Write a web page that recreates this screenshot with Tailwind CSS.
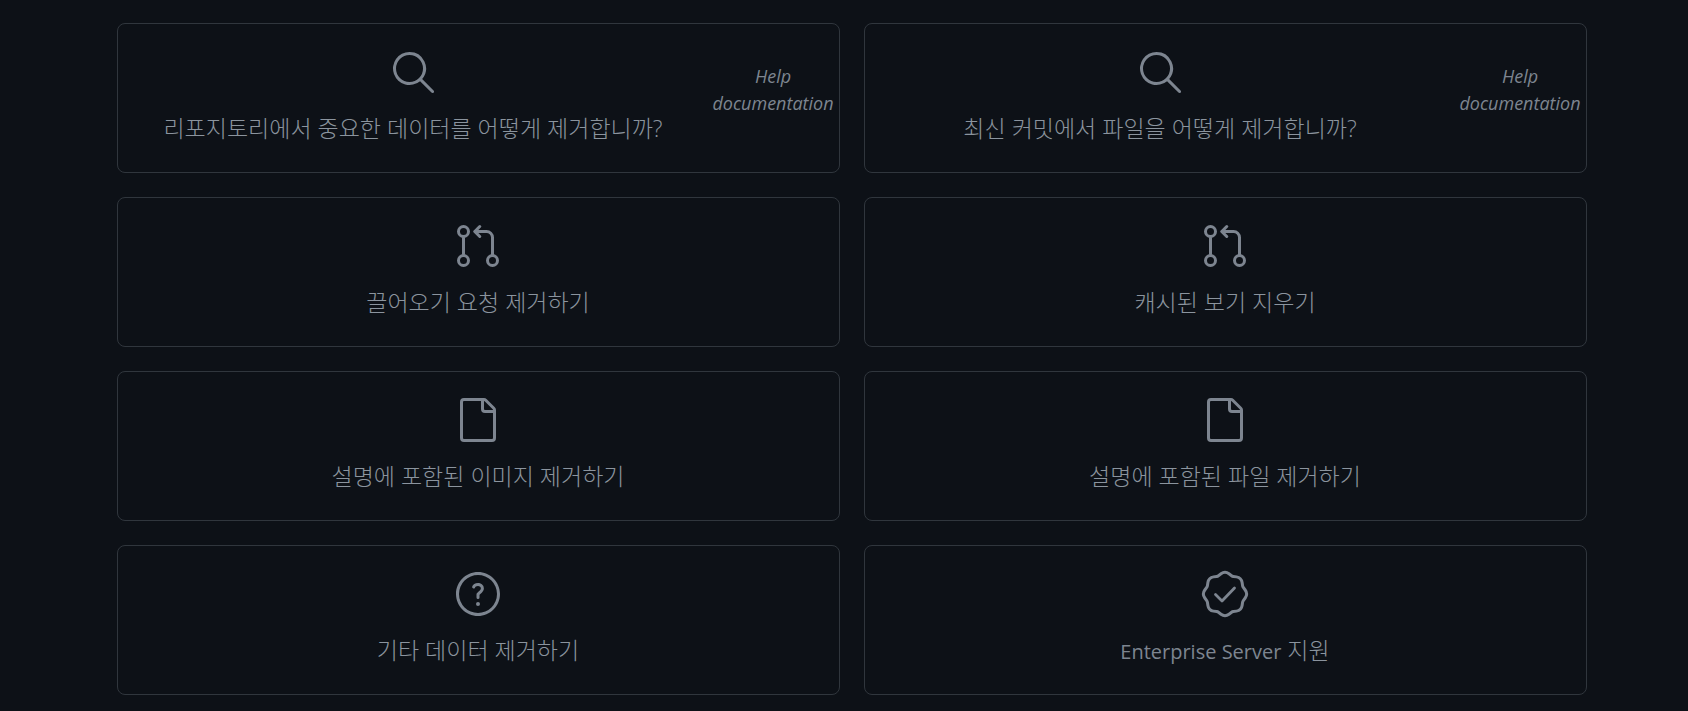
<!DOCTYPE html>
<html lang="ko">
<head>
  <meta charset="UTF-8">
  <meta name="viewport" content="width=device-width, initial-scale=1.0">
  <title>데이터 제거</title>
  <script src="https://cdn.jsdelivr.net/npm/@tailwindcss/browser@4"></script>
</head>
<body class="bg-[#0d1117] text-[#7d8590] font-['Open_Sans','Noto_Sans_CJK_KR',sans-serif] min-h-screen">
  <main class="grid grid-cols-2 gap-6 pt-[23px] pl-[117px] pr-[101px]">

    <a href="#" class="flex rounded-lg border border-[#30363d] pr-px">
      <div class="flex-1 flex flex-col items-center gap-4 pt-6 pb-7">
        <svg class="size-12" viewBox="0 0 24 24" fill="currentColor" aria-hidden="true"><path d="M10.25 2a8.25 8.25 0 0 1 6.34 13.53l5.69 5.69a.749.749 0 0 1-.326 1.275.749.749 0 0 1-.734-.215l-5.69-5.69A8.25 8.25 0 1 1 10.25 2ZM3.5 10.25a6.75 6.75 0 1 0 13.5 0 6.75 6.75 0 0 0-13.5 0Z"/></svg>
        <span class="h-8 text-[23px] leading-8 font-light text-[#8b949e]">리포지토리에서 중요한 데이터를 어떻게 제거합니까?</span>
      </div>
      <em class="w-[130px] pt-[39px] text-center text-[18px] leading-[27px]">Help documentation</em>
    </a>

    <a href="#" class="flex rounded-lg border border-[#30363d] pr-px">
      <div class="flex-1 flex flex-col items-center gap-4 pt-6 pb-7">
        <svg class="size-12" viewBox="0 0 24 24" fill="currentColor" aria-hidden="true"><path d="M10.25 2a8.25 8.25 0 0 1 6.34 13.53l5.69 5.69a.749.749 0 0 1-.326 1.275.749.749 0 0 1-.734-.215l-5.69-5.69A8.25 8.25 0 1 1 10.25 2ZM3.5 10.25a6.75 6.75 0 1 0 13.5 0 6.75 6.75 0 0 0-13.5 0Z"/></svg>
        <span class="h-8 text-[23px] leading-8 font-light text-[#8b949e]">최신 커밋에서 파일을 어떻게 제거합니까?</span>
      </div>
      <em class="w-[130px] pt-[39px] text-center text-[18px] leading-[27px]">Help documentation</em>
    </a>

    <a href="#" class="flex flex-col items-center gap-4 rounded-lg border border-[#30363d] pt-6 pb-7 pr-px">
      <svg class="size-12" viewBox="0 0 24 24" fill="currentColor" aria-hidden="true"><path d="M16 19.25a3.25 3.25 0 1 1 6.5 0 3.25 3.25 0 0 1-6.5 0Zm-14.5 0a3.25 3.25 0 1 1 6.5 0 3.25 3.25 0 0 1-6.5 0Zm0-14.5a3.25 3.25 0 1 1 6.5 0 3.25 3.25 0 0 1-6.5 0ZM4.75 6.5a1.75 1.75 0 1 0 0-3.5 1.75 1.75 0 0 0 0 3.5Zm0 14.5a1.75 1.75 0 1 0 0-3.5 1.75 1.75 0 0 0 0 3.5Zm14.5 0a1.75 1.75 0 1 0 0-3.5 1.75 1.75 0 0 0 0 3.5Z"/><path d="M4.75 7.25A.75.75 0 0 1 5.5 8v8A.75.75 0 0 1 4 16V8a.75.75 0 0 1 .75-.75Zm8.655-5.53a.75.75 0 0 1 0 1.06L12.185 4h4.065A3.75 3.75 0 0 1 20 7.75v8.75a.75.75 0 0 1-1.5 0V7.75a2.25 2.25 0 0 0-2.25-2.25h-4.064l1.22 1.22a.75.75 0 0 1-1.061 1.06l-2.5-2.5a.75.75 0 0 1 0-1.06l2.5-2.5a.75.75 0 0 1 1.06 0Z"/></svg>
      <span class="h-8 text-[23px] leading-8 font-light text-[#8b949e]">끌어오기 요청 제거하기</span>
    </a>

    <a href="#" class="flex flex-col items-center gap-4 rounded-lg border border-[#30363d] pt-6 pb-7 pr-px">
      <svg class="size-12" viewBox="0 0 24 24" fill="currentColor" aria-hidden="true"><path d="M16 19.25a3.25 3.25 0 1 1 6.5 0 3.25 3.25 0 0 1-6.5 0Zm-14.5 0a3.25 3.25 0 1 1 6.5 0 3.25 3.25 0 0 1-6.5 0Zm0-14.5a3.25 3.25 0 1 1 6.5 0 3.25 3.25 0 0 1-6.5 0ZM4.75 6.5a1.75 1.75 0 1 0 0-3.5 1.75 1.75 0 0 0 0 3.5Zm0 14.5a1.75 1.75 0 1 0 0-3.5 1.75 1.75 0 0 0 0 3.5Zm14.5 0a1.75 1.75 0 1 0 0-3.5 1.75 1.75 0 0 0 0 3.5Z"/><path d="M4.75 7.25A.75.75 0 0 1 5.5 8v8A.75.75 0 0 1 4 16V8a.75.75 0 0 1 .75-.75Zm8.655-5.53a.75.75 0 0 1 0 1.06L12.185 4h4.065A3.75 3.75 0 0 1 20 7.75v8.75a.75.75 0 0 1-1.5 0V7.75a2.25 2.25 0 0 0-2.25-2.25h-4.064l1.22 1.22a.75.75 0 0 1-1.061 1.06l-2.5-2.5a.75.75 0 0 1 0-1.06l2.5-2.5a.75.75 0 0 1 1.06 0Z"/></svg>
      <span class="h-8 text-[23px] leading-8 font-light text-[#8b949e]">캐시된 보기 지우기</span>
    </a>

    <a href="#" class="flex flex-col items-center gap-4 rounded-lg border border-[#30363d] pt-6 pb-7 pr-px">
      <svg class="size-12" viewBox="0 0 24 24" fill="currentColor" aria-hidden="true"><path d="M3 3a2 2 0 0 1 2-2h9.982a2 2 0 0 1 1.414.586l4.018 4.018A2 2 0 0 1 21 7.018V21a2 2 0 0 1-2 2H5a2 2 0 0 1-2-2Zm2-.5a.5.5 0 0 0-.5.5v18a.5.5 0 0 0 .5.5h14a.5.5 0 0 0 .5-.5V8.5h-4a2 2 0 0 1-2-2v-4Zm10 0v4a.5.5 0 0 0 .5.5h4a.5.5 0 0 0-.146-.336l-4.018-4.018A.5.5 0 0 0 15 2.5Z"/></svg>
      <span class="h-8 text-[23px] leading-8 font-light text-[#8b949e]">설명에 포함된 이미지 제거하기</span>
    </a>

    <a href="#" class="flex flex-col items-center gap-4 rounded-lg border border-[#30363d] pt-6 pb-7 pr-px">
      <svg class="size-12" viewBox="0 0 24 24" fill="currentColor" aria-hidden="true"><path d="M3 3a2 2 0 0 1 2-2h9.982a2 2 0 0 1 1.414.586l4.018 4.018A2 2 0 0 1 21 7.018V21a2 2 0 0 1-2 2H5a2 2 0 0 1-2-2Zm2-.5a.5.5 0 0 0-.5.5v18a.5.5 0 0 0 .5.5h14a.5.5 0 0 0 .5-.5V8.5h-4a2 2 0 0 1-2-2v-4Zm10 0v4a.5.5 0 0 0 .5.5h4a.5.5 0 0 0-.146-.336l-4.018-4.018A.5.5 0 0 0 15 2.5Z"/></svg>
      <span class="h-8 text-[23px] leading-8 font-light text-[#8b949e]">설명에 포함된 파일 제거하기</span>
    </a>

    <a href="#" class="flex flex-col items-center gap-4 rounded-lg border border-[#30363d] pt-6 pb-7 pr-px">
      <svg class="size-12" viewBox="0 0 24 24" fill="currentColor" aria-hidden="true"><path d="M10.97 8.265a1.45 1.45 0 0 0-.487.57.75.75 0 0 1-1.341-.67c.2-.402.513-.826.997-1.148C10.627 6.69 11.244 6.5 12 6.5c.658 0 1.369.195 1.934.619a2.45 2.45 0 0 1 1.004 2.006c0 1.033-.513 1.72-1.027 2.215-.19.183-.399.358-.579.508l-.147.123a4.329 4.329 0 0 0-.435.409v1.37a.75.75 0 1 1-1.5 0v-1.473c0-.237.067-.504.247-.736.22-.28.486-.517.718-.714l.183-.153.001-.001c.172-.143.324-.27.47-.412.368-.355.569-.676.569-1.136a.953.953 0 0 0-.404-.806C12.766 8.118 12.384 8 12 8c-.494 0-.814.121-1.03.265ZM13 17a1 1 0 1 1-2 0 1 1 0 0 1 2 0ZM12 1c6.075 0 11 4.925 11 11s-4.925 11-11 11S1 18.075 1 12 5.925 1 12 1ZM2.5 12a9.5 9.5 0 0 0 9.5 9.5 9.5 9.5 0 0 0 9.5-9.5A9.5 9.5 0 0 0 12 2.5 9.5 9.5 0 0 0 2.5 12Z"/></svg>
      <span class="h-8 text-[23px] leading-8 font-light text-[#8b949e]">기타 데이터 제거하기</span>
    </a>

    <a href="#" class="flex flex-col items-center gap-4 rounded-lg border border-[#30363d] pt-6 pb-7 pr-px">
      <svg class="size-12" viewBox="0 0 24 24" fill="none" stroke="currentColor" stroke-linecap="round" stroke-linejoin="round" aria-hidden="true"><path stroke-width="1.6" transform="translate(12 12) scale(.935) translate(-12 -12)" d="m14.136 1.2 1.375 1.01c.274.201.593.333.929.384l1.687.259a3.61 3.61 0 0 1 3.02 3.021l.259 1.686c.051.336.183.655.384.929l1.01 1.375a3.61 3.61 0 0 1 0 4.272l-1.01 1.375a2.106 2.106 0 0 0-.384.929l-.259 1.687a3.61 3.61 0 0 1-3.021 3.02l-1.686.259a2.106 2.106 0 0 0-.929.384l-1.375 1.01a3.61 3.61 0 0 1-4.272 0l-1.375-1.01a2.106 2.106 0 0 0-.929-.384l-1.687-.259a3.61 3.61 0 0 1-3.02-3.021l-.259-1.686a2.106 2.106 0 0 0-.384-.929L1.2 14.136a3.61 3.61 0 0 1 0-4.272l1.01-1.375c.201-.274.333-.593.384-.929l.259-1.687a3.61 3.61 0 0 1 3.021-3.02l1.686-.259c.336-.051.655-.183.929-.384L9.864 1.2a3.61 3.61 0 0 1 4.272 0Z"/><path stroke-width="1.4" d="m7.25 12.25 3.25 3.25 6.25-6.5"/></svg>
      <span class="h-8 text-[23px] leading-8 font-light text-[#8b949e]"><span class="text-xl leading-none font-normal text-[#7d8590]">Enterprise Server</span> 지원</span>
    </a>

  </main>
</body>
</html>
